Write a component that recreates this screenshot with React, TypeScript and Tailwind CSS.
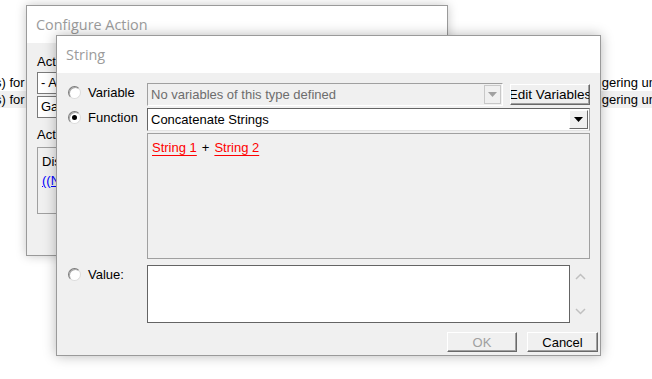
import React from "react";

const UI = { fontFamily: '"Liberation Sans", Arial, sans-serif' };
const TITLE = { fontFamily: '"Open Sans", "Noto Sans", sans-serif' };

function Radio({ checked }: { checked?: boolean }) {
  return (
    <span className="relative inline-flex h-[13px] w-[13px] shrink-0 items-center justify-center rounded-full border border-t-[#7a7a7a] border-l-[#7a7a7a] border-r-[#dcdcdc] border-b-[#dcdcdc] bg-white shadow-[inset_1px_1px_0_#a8a8a8]">
      {checked && <span className="h-[5px] w-[5px] rounded-full bg-black" />}
    </span>
  );
}

function Arrow({ color }: { color: string }) {
  return (
    <svg width="9" height="5" viewBox="0 0 9 5">
      <path d="M0 0 H9 L4.5 5 Z" fill={color} />
    </svg>
  );
}

export default function App() {
  return (
    <div className="relative h-[379px] w-[652px] overflow-hidden bg-white text-[13px] text-black" style={UI}>
      {/* underlying app rows */}
      <div className="flex flex-col pt-[74px]">
        <div className="flex h-[17px] items-center justify-between leading-none">
          <span className="-ml-[5px]">s) for</span>
          <span className="mr-[-4px]">gering un</span>
        </div>
        <div className="flex h-[17px] items-center justify-between bg-[#f0f0f0] leading-none">
          <span className="-ml-[5px]">s) for</span>
          <span className="mr-[-4px]">gering un</span>
        </div>
      </div>

      {/* back dialog: Configure Action */}
      <div className="absolute left-[26px] top-[5px] flex h-[251px] w-[422px] flex-col border border-[#9a9a9a] bg-[#f0f0f0] shadow-[0_0_10px_rgba(0,0,0,0.22)]">
        <div className="flex h-[37px] shrink-0 items-center bg-white pl-[9px] text-[14.4px] text-[#9b9b9b]" style={TITLE}>
          Configure Action
        </div>
        <div className="flex flex-col pl-[10px] pt-[11px]">
          <div className="leading-[15px]">Action</div>
          <div className="mt-[3px] flex h-[22px] w-[360px] items-center border border-[#7a7a7a] bg-white pl-[3px]">- A</div>
          <div className="mt-[2px] flex h-[22px] w-[360px] items-center border border-[#7a7a7a] bg-white pl-[3px]">Ga</div>
          <div className="mt-[9px] leading-[15px]">Action</div>
          <div className="mt-[5px] flex h-[67px] w-[360px] flex-col border border-[#a0a0a0] pl-[4px] pt-[4px] leading-[19px]">
            <span>Display</span>
            <span className="text-[#0000ff] underline">((None))</span>
          </div>
        </div>
      </div>

      {/* front dialog: String */}
      <div className="absolute left-[56px] top-[35px] flex h-[321px] w-[545px] flex-col border border-[#9a9a9a] bg-[#f0f0f0] shadow-[0_0_12px_rgba(0,0,0,0.28)]">
        <div className="flex h-[37px] shrink-0 items-center bg-white pl-[9px] text-[14.4px] text-[#9b9b9b]" style={TITLE}>
          String
        </div>
        <div className="flex flex-col pl-[11px] pt-[10px]">
          {/* Variable row */}
          <div className="flex h-[23px] items-center">
            <div className="flex w-[79px] items-center gap-[7px] pb-[4px]">
              <Radio />
              <span className="leading-none">Variable</span>
            </div>
            <div className="flex h-[23px] w-[356px] items-center border border-t-[#a0a0a0] border-l-[#a0a0a0] border-r-white border-b-white bg-[#f0f0f0] pl-[3px] text-[#6d6d6d]">
              <span className="flex-1 leading-none">No variables of this type defined</span>
              <span className="mr-[1px] flex h-[19px] w-[17px] items-center justify-center border border-[#c8c8c8] bg-[#f0f0f0]">
                <Arrow color="#a0a0a0" />
              </span>
            </div>
            <button className="ml-[7px] flex h-[21px] w-[80px] items-center justify-center overflow-hidden whitespace-nowrap border border-t-white border-l-white border-r-[#696969] border-b-[#696969] bg-[#f0f0f0] text-[13.5px] leading-none shadow-[inset_-1px_-1px_0_#a0a0a0]">
              Edit Variables
            </button>
          </div>
          {/* Function row */}
          <div className="mt-[2px] flex h-[23px] items-center">
            <div className="flex w-[79px] items-center gap-[7px] pb-[4px]">
              <Radio checked />
              <span className="leading-none">Function</span>
            </div>
            <div className="flex h-[23px] w-[443px] items-center border border-t-[#646464] border-l-[#646464] border-r-[#a0a0a0] border-b-[#e3e3e3] bg-white pl-[3px]">
              <span className="flex-1 leading-none">Concatenate Strings</span>
              <span className="mr-[1px] flex h-[19px] w-[19px] items-center justify-center border border-t-white border-l-white border-r-[#696969] border-b-[#696969] bg-[#f0f0f0]">
                <Arrow color="#000" />
              </span>
            </div>
          </div>
          {/* Function area */}
          <div className="ml-[79px] mt-[2px] h-[126px] w-[443px] border border-[#a0a0a0] pl-[4px] pt-[4px]">
            <span className="text-[#ff0000] underline decoration-[#ff0000] underline-offset-[3px]">String 1</span>
            <span className="mx-[5px]">+</span>
            <span className="text-[#ff0000] underline decoration-[#ff0000] underline-offset-[3px]">String 2</span>
          </div>
          {/* Value row */}
          <div className="mt-[6px] flex">
            <div className="flex w-[79px] items-center gap-[7px] self-start pt-[3px]">
              <Radio />
              <span className="leading-[13px]">Value:</span>
            </div>
            <div className="h-[58px] w-[423px] border border-[#646464] bg-white" />
            <div className="ml-[4px] flex h-[58px] w-[12px] flex-col items-center justify-between pb-[8px] pt-[8px]">
              <svg width="11" height="7" viewBox="0 0 11 7"><path d="M1 6 L5.5 1.5 L10 6" stroke="#c0c0c0" strokeWidth="1.5" fill="none" /></svg>
              <svg width="11" height="7" viewBox="0 0 11 7"><path d="M1 1 L5.5 5.5 L10 1" stroke="#c0c0c0" strokeWidth="1.5" fill="none" /></svg>
            </div>
          </div>
          {/* Buttons */}
          <div className="mt-[9px] flex justify-end gap-[10px] pr-[2px]">
            <button className="flex h-[20px] w-[70px] items-center justify-center border border-t-white border-l-white border-r-[#696969] border-b-[#696969] bg-[#f0f0f0] leading-none text-[#a0a0a0] shadow-[inset_-1px_-1px_0_#a0a0a0]">
              OK
            </button>
            <button className="flex h-[20px] w-[71px] items-center justify-center border border-t-white border-l-white border-r-[#696969] border-b-[#696969] bg-[#f0f0f0] leading-none shadow-[inset_-1px_-1px_0_#a0a0a0]">
              Cancel
            </button>
          </div>
        </div>
      </div>
    </div>
  );
}
